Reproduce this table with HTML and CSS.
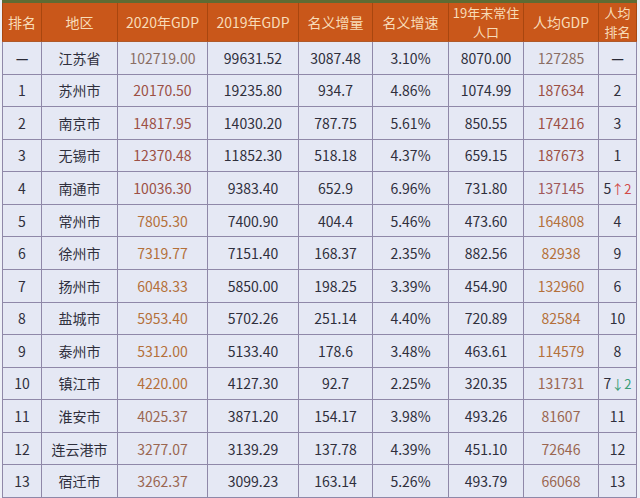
FILE: index.html
```html
<!DOCTYPE html>
<html lang="zh">
<head>
<meta charset="utf-8">
<title>江苏各市GDP</title>
<link rel="stylesheet" href="styles.css">
</head>
<body>
<table class="gdp">
  <colgroup>
    <col class="w-rank"><col class="w-area"><col class="w-g20"><col class="w-g19"><col class="w-inc"><col class="w-rate"><col class="w-pop"><col class="w-per"><col class="w-prank">
  </colgroup>
  <thead>
    <tr>
      <th>排名</th><th>地区</th><th>2020年GDP</th><th>2019年GDP</th><th>名义增量</th><th>名义增速</th><th class="two"><span class="ln">19年末常住</span><span class="ln">人口</span></th><th>人均GDP</th><th class="two"><span class="ln">人均</span><span class="ln">排名</span></th>
    </tr>
  </thead>
  <tbody>
    <tr><td class="dash">—</td><td>江苏省</td><td class="g">102719.00</td><td>99631.52</td><td>3087.48</td><td>3.10%</td><td>8070.00</td><td class="g">127285</td><td class="dash">—</td></tr>
    <tr><td>1</td><td>苏州市</td><td class="r">20170.50</td><td>19235.80</td><td>934.7</td><td>4.86%</td><td>1074.99</td><td class="r">187634</td><td>2</td></tr>
    <tr><td>2</td><td>南京市</td><td class="r">14817.95</td><td>14030.20</td><td>787.75</td><td>5.61%</td><td>850.55</td><td class="r">174216</td><td>3</td></tr>
    <tr><td>3</td><td>无锡市</td><td class="r">12370.48</td><td>11852.30</td><td>518.18</td><td>4.37%</td><td>659.15</td><td class="r">187673</td><td>1</td></tr>
    <tr><td>4</td><td>南通市</td><td class="r">10036.30</td><td>9383.40</td><td>652.9</td><td>6.96%</td><td>731.80</td><td class="p">137145</td><td>5<span class="up">↑2</span></td></tr>
    <tr><td>5</td><td>常州市</td><td class="o">7805.30</td><td>7400.90</td><td>404.4</td><td>5.46%</td><td>473.60</td><td class="o">164808</td><td>4</td></tr>
    <tr><td>6</td><td>徐州市</td><td class="o">7319.77</td><td>7151.40</td><td>168.37</td><td>2.35%</td><td>882.56</td><td class="o">82938</td><td>9</td></tr>
    <tr><td>7</td><td>扬州市</td><td class="o">6048.33</td><td>5850.00</td><td>198.25</td><td>3.39%</td><td>454.90</td><td class="o">132960</td><td>6</td></tr>
    <tr><td>8</td><td>盐城市</td><td class="o">5953.40</td><td>5702.26</td><td>251.14</td><td>4.40%</td><td>720.89</td><td class="o">82584</td><td>10</td></tr>
    <tr><td>9</td><td>泰州市</td><td class="o">5312.00</td><td>5133.40</td><td>178.6</td><td>3.48%</td><td>463.61</td><td class="o">114579</td><td>8</td></tr>
    <tr><td>10</td><td>镇江市</td><td class="o">4220.00</td><td>4127.30</td><td>92.7</td><td>2.25%</td><td>320.35</td><td class="b">131731</td><td>7<span class="down">↓2</span></td></tr>
    <tr><td>11</td><td>淮安市</td><td class="b">4025.37</td><td>3871.20</td><td>154.17</td><td>3.98%</td><td>493.26</td><td class="b">81607</td><td>11</td></tr>
    <tr><td>12</td><td>连云港市</td><td class="b">3277.07</td><td>3139.29</td><td>137.78</td><td>4.39%</td><td>451.10</td><td class="b">72646</td><td>12</td></tr>
    <tr><td>13</td><td>宿迁市</td><td class="b">3262.37</td><td>3099.23</td><td>163.14</td><td>5.26%</td><td>493.79</td><td class="b">66068</td><td>13</td></tr>
  </tbody>
</table>
</body>
</html>
```

FILE: styles.css
```css
html, body {
  margin: 0;
  padding: 0;
  background: #eef0f7;
  height: 498px;
  overflow: hidden;
}

body {
  font-family: "Noto Sans CJK SC", "Noto Sans", sans-serif;
  font-size: 14px;
  color: #2f2f3c;
}

.gdp {
  margin-left: 2px;
  border-collapse: collapse;
  table-layout: fixed;
  width: 634px;
  border-top: 3px solid #5e6b33;
}

.w-rank { width: 39px; }
.w-area { width: 76px; }
.w-g20 { width: 90px; }
.w-g19 { width: 91px; }
.w-inc { width: 74px; }
.w-rate { width: 76px; }
.w-pop { width: 75px; }
.w-per { width: 75px; }
.w-prank { width: 38px; }

.gdp th {
  background: #c9571a;
  color: #f8dcb8;
  font-weight: 400;
  height: 39px;
  padding: 0;
  line-height: 18px;
  text-align: center;
  border-left: 1px solid #a8460f;
  border-right: 1px solid #a8460f;
  border-bottom: 1px solid #b05a2a;
  box-sizing: border-box;
}

.gdp th.two {
  font-size: 13px;
}

.gdp th .ln {
  display: block;
  height: 19px;
  line-height: 19px;
}

.gdp td {
  background: #e5e8f4;
  height: 32.57px;
  padding: 0;
  text-align: center;
  white-space: nowrap;
  border: 1px solid #8f88a8;
  box-sizing: border-box;
  line-height: 20px;
}

.gdp td.dash {
  font-weight: 700;
  color: #2a2a36;
}

.g { color: #8a6e64 !important; }
.r { color: #9c5045 !important; }
.p { color: #a0585a !important; }
.o { color: #b4703a !important; }
.b { color: #9a6650 !important; }

.up {
  color: #d24a48;
  font-size: 13px;
}

.down {
  color: #3a9e78;
  font-size: 13px;
}
```
